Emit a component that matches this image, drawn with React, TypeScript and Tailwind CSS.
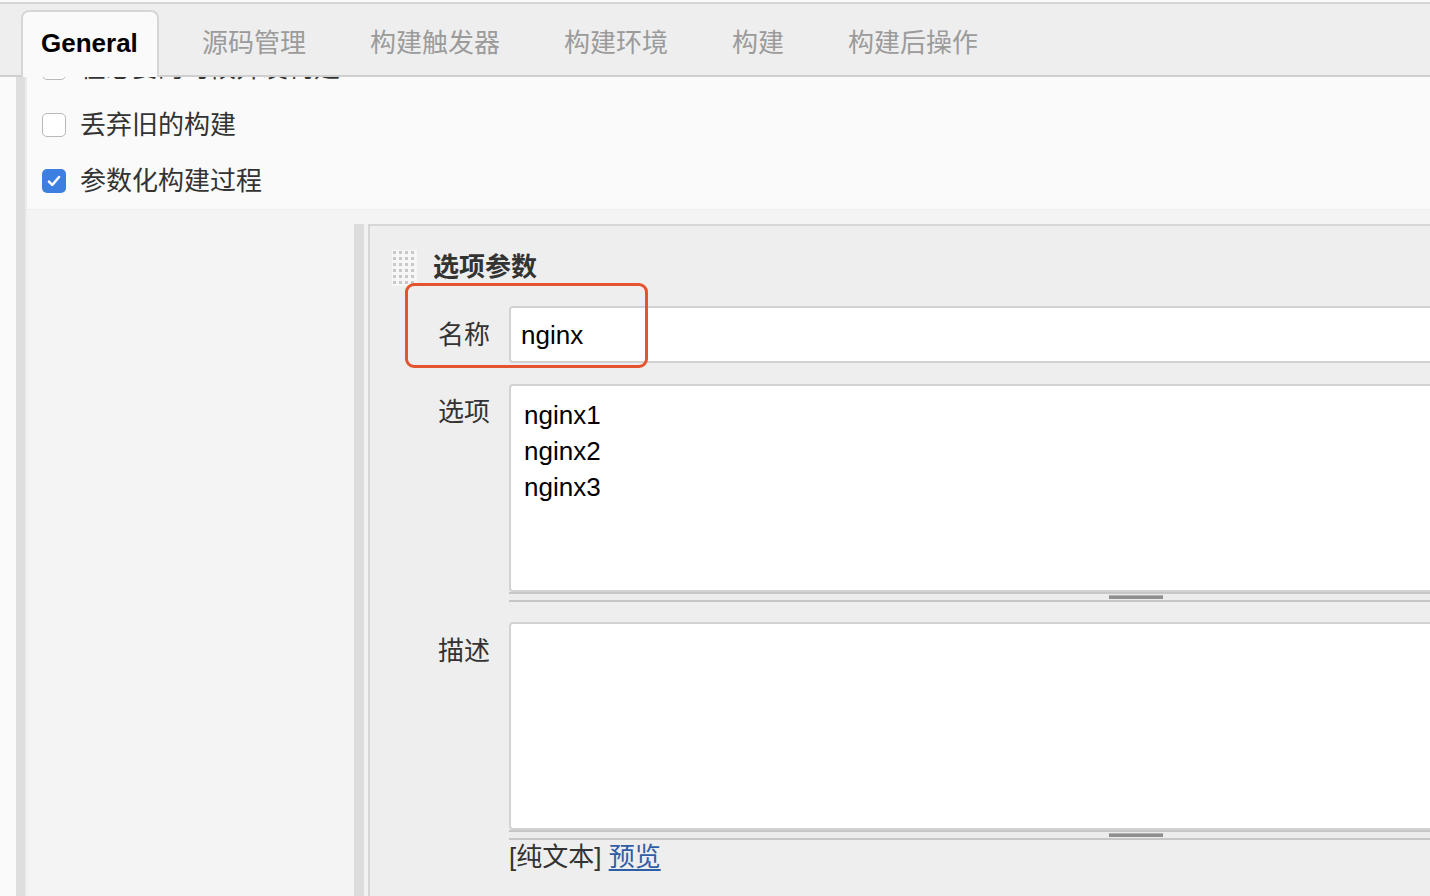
import React from 'react';

const font = "font-['Liberation_Sans','Noto_Sans_CJK_SC',sans-serif]";

const tabs = ['源码管理', '构建触发器', '构建环境', '构建', '构建后操作'];

function Checkbox({ checked }: { checked?: boolean }) {
  if (checked) {
    return (
      <div className="w-[24px] h-[24px] rounded-[5px] bg-[#3d7fe0] flex items-center justify-center shrink-0">
        <svg width="18" height="18" viewBox="0 0 16 16" fill="none">
          <path d="M3.5 8.5 L6.5 11.5 L12.5 4.5" stroke="white" strokeWidth="2.2" strokeLinecap="round" strokeLinejoin="round" />
        </svg>
      </div>
    );
  }
  return <div className="w-[24px] h-[24px] rounded-[5px] bg-white border border-[#b8b8b8] shrink-0" />;
}

function DragHandle() {
  const dots = [];
  for (let r = 0; r < 6; r++) {
    for (let c = 0; c < 4; c++) {
      dots.push(<rect key={r + '-' + c} x={1 + c * 6} y={1 + r * 6} width="3" height="3" fill="#c9c9c9" />);
    }
  }
  return (
    <svg width="25" height="36" viewBox="0 0 25 36" className="bg-[#f6f6f6]">
      {dots}
    </svg>
  );
}

function ResizeBar() {
  return (
    <div className="w-[960px] h-[10px] bg-[#ececec] border-t-2 border-b-2 border-[#c6c6c6] flex items-center">
      <div className="ml-[600px] w-[54px] h-[4px] bg-[#8f8f8f] border-t border-[#b0b0b0]" />
    </div>
  );
}

function TextBox({ lines }: { lines: string[] }) {
  return (
    <div className="flex flex-col">
      <div className="w-[960px] h-[208px] bg-white border-2 border-[#d2d2d2] rounded-tl-[4px] rounded-bl-[4px] pt-[11px] pl-[13px] text-[26px] leading-[36px] text-black">
        {lines.map((l) => (
          <div key={l}>{l}</div>
        ))}
      </div>
      <ResizeBar />
    </div>
  );
}

export default function App() {
  return (
    <div className={`w-[1430px] h-[896px] overflow-hidden bg-[#fafafa] flex flex-col ${font}`}>
      {/* tab bar */}
      <div className="mt-[2px] h-[75px] bg-[#eeeeee] border-t-2 border-b-2 border-t-[#d6d6d6] border-b-[#cfcfcf] flex items-start shrink-0">
        <div className="ml-[21px] mt-[6px] mb-[-2px] w-[138px] h-[67px] bg-[#fafafa] border-2 border-b-0 border-[#d6d6d6] rounded-t-[8px] pt-[16px] pl-[18px] text-[26px] leading-[30px] font-bold text-black">
          General
        </div>
        <div className="ml-[43px] mt-[24px] flex gap-[64px] text-[26px] leading-[30px] text-[#9b9b9b]">
          {tabs.map((t) => (
            <span key={t}>{t}</span>
          ))}
        </div>
      </div>

      {/* body */}
      <div className="flex flex-1 min-h-0">
        <div className="w-[16px] bg-[#fafafa]" />
        <div className="w-[9px] bg-[#dedede]" />
        <div className="w-[2px] bg-[#ececec]" />
        <div className="flex-1 flex flex-col overflow-hidden">
          <div className="bg-[#fafafa] flex flex-col shrink-0 overflow-hidden h-[133px] border-b border-[#efefef]">
            <div className="mt-[-38px] flex flex-col text-[26px] leading-[30px] text-[#333]">
              {[
                { label: '在必要的时候并发构建', checked: false },
                { label: '丢弃旧的构建', checked: false },
                { label: '参数化构建过程', checked: true },
              ].map((r, i) => (
                <div key={r.label} className={`flex items-center gap-[14px] pl-[15px] ${i === 0 ? 'h-[58px]' : 'h-[56px]'}`}>
                  <Checkbox checked={r.checked} />
                  <span>{r.label}</span>
                </div>
              ))}
            </div>
          </div>

          <div className="flex-1 bg-[#f4f4f4] flex pt-[14px]">
            <div className="w-[327px] shrink-0" />
            <div className="w-[10px] bg-[#dcdcdc] shrink-0" />
            <div className="w-[4px] bg-[#f1f1f1] shrink-0" />
            <div className="flex-1 bg-[#eeeeee] border-l-2 border-t-2 border-[#d6d6d6] flex flex-col text-[26px] text-[#333]">
              <div className="mt-[24px] ml-[22px] flex items-center gap-[16px] h-[36px]">
                <DragHandle />
                <span className="font-bold leading-[30px] mt-[-2px]">选项参数</span>
              </div>

              <div className="relative mt-[20px] flex items-center">
                <div className="w-[120px] text-right leading-[36px] shrink-0">名称</div>
                <div className="ml-[19px] w-[960px] h-[57px] bg-white border-2 border-[#d2d2d2] rounded-l-[4px] pl-[10px] flex items-center text-black leading-[30px]">
                  nginx
                </div>
                <div className="absolute left-[35px] top-[-23px] w-[243px] h-[85px] border-[3px] border-[#e4542f] rounded-[9px]" />
              </div>

              <div className="mt-[21px] flex items-start">
                <div className="w-[120px] text-right leading-[36px] pt-[10px] shrink-0">选项</div>
                <div className="ml-[19px]">
                  <TextBox lines={['nginx1', 'nginx2', 'nginx3']} />
                </div>
              </div>

              <div className="mt-[20px] flex items-start">
                <div className="w-[120px] text-right leading-[36px] pt-[11px] shrink-0">描述</div>
                <div className="ml-[19px]">
                  <TextBox lines={[]} />
                </div>
              </div>

              <div className="mt-[2px] ml-[139px] leading-[30px]">
                [纯文本] <span className="text-[#2e5ea6] underline underline-offset-[3px]">预览</span>
              </div>
            </div>
          </div>
        </div>
      </div>
    </div>
  );
}
